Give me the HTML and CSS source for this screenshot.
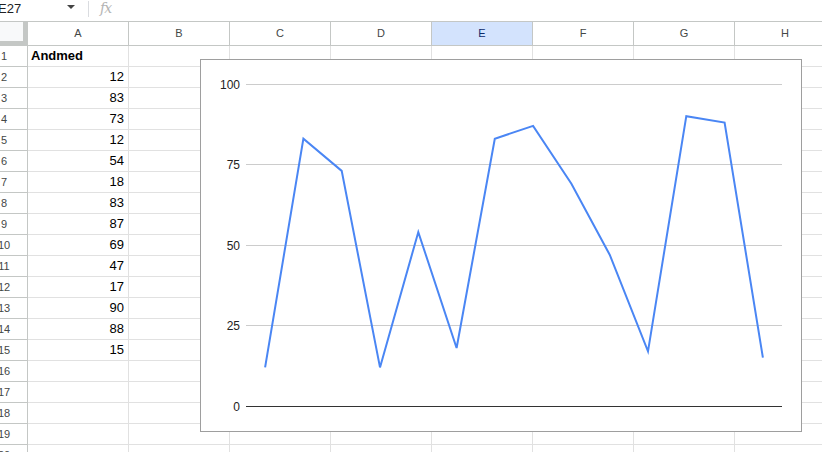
FILE: index.html
```html
<!DOCTYPE html>
<html>
<head>
<meta charset="utf-8">
<link rel="stylesheet" href="styles.css">
</head>
<body>
<div class="app">
  <div class="formula-bar">
    <div class="name-box">E27</div>
    <div class="name-caret"></div>
    <div class="fb-sep"></div>
    <div class="fx">fx</div>
  </div>
  <div class="sheet-wrap">
    <div class="sheet">
      <div class="corner"></div>
      <div class="ch">A</div><div class="ch">B</div><div class="ch">C</div><div class="ch">D</div>
      <div class="ch sel">E</div><div class="ch">F</div><div class="ch">G</div><div class="ch">H</div>

      <div class="rh">1</div><div class="c bold">Andmed</div><div class="c"></div><div class="c"></div><div class="c"></div><div class="c"></div><div class="c"></div><div class="c"></div><div class="c"></div>
      <div class="rh">2</div><div class="c num">12</div><div class="c"></div><div class="c"></div><div class="c"></div><div class="c"></div><div class="c"></div><div class="c"></div><div class="c"></div>
      <div class="rh">3</div><div class="c num">83</div><div class="c"></div><div class="c"></div><div class="c"></div><div class="c"></div><div class="c"></div><div class="c"></div><div class="c"></div>
      <div class="rh">4</div><div class="c num">73</div><div class="c"></div><div class="c"></div><div class="c"></div><div class="c"></div><div class="c"></div><div class="c"></div><div class="c"></div>
      <div class="rh">5</div><div class="c num">12</div><div class="c"></div><div class="c"></div><div class="c"></div><div class="c"></div><div class="c"></div><div class="c"></div><div class="c"></div>
      <div class="rh">6</div><div class="c num">54</div><div class="c"></div><div class="c"></div><div class="c"></div><div class="c"></div><div class="c"></div><div class="c"></div><div class="c"></div>
      <div class="rh">7</div><div class="c num">18</div><div class="c"></div><div class="c"></div><div class="c"></div><div class="c"></div><div class="c"></div><div class="c"></div><div class="c"></div>
      <div class="rh">8</div><div class="c num">83</div><div class="c"></div><div class="c"></div><div class="c"></div><div class="c"></div><div class="c"></div><div class="c"></div><div class="c"></div>
      <div class="rh">9</div><div class="c num">87</div><div class="c"></div><div class="c"></div><div class="c"></div><div class="c"></div><div class="c"></div><div class="c"></div><div class="c"></div>
      <div class="rh">10</div><div class="c num">69</div><div class="c"></div><div class="c"></div><div class="c"></div><div class="c"></div><div class="c"></div><div class="c"></div><div class="c"></div>
      <div class="rh">11</div><div class="c num">47</div><div class="c"></div><div class="c"></div><div class="c"></div><div class="c"></div><div class="c"></div><div class="c"></div><div class="c"></div>
      <div class="rh">12</div><div class="c num">17</div><div class="c"></div><div class="c"></div><div class="c"></div><div class="c"></div><div class="c"></div><div class="c"></div><div class="c"></div>
      <div class="rh">13</div><div class="c num">90</div><div class="c"></div><div class="c"></div><div class="c"></div><div class="c"></div><div class="c"></div><div class="c"></div><div class="c"></div>
      <div class="rh">14</div><div class="c num">88</div><div class="c"></div><div class="c"></div><div class="c"></div><div class="c"></div><div class="c"></div><div class="c"></div><div class="c"></div>
      <div class="rh">15</div><div class="c num">15</div><div class="c"></div><div class="c"></div><div class="c"></div><div class="c"></div><div class="c"></div><div class="c"></div><div class="c"></div>
      <div class="rh">16</div><div class="c"></div><div class="c"></div><div class="c"></div><div class="c"></div><div class="c"></div><div class="c"></div><div class="c"></div><div class="c"></div>
      <div class="rh">17</div><div class="c"></div><div class="c"></div><div class="c"></div><div class="c"></div><div class="c"></div><div class="c"></div><div class="c"></div><div class="c"></div>
      <div class="rh">18</div><div class="c"></div><div class="c"></div><div class="c"></div><div class="c"></div><div class="c"></div><div class="c"></div><div class="c"></div><div class="c"></div>
      <div class="rh">19</div><div class="c"></div><div class="c"></div><div class="c"></div><div class="c"></div><div class="c"></div><div class="c"></div><div class="c"></div><div class="c"></div>
      <div class="rh">20</div><div class="c"></div><div class="c"></div><div class="c"></div><div class="c"></div><div class="c"></div><div class="c"></div><div class="c"></div><div class="c"></div>
    </div>

    <div class="chart">
      <svg width="602" height="373" viewBox="0 0 602 373" xmlns="http://www.w3.org/2000/svg">
        <g stroke="#cccccc" stroke-width="1">
          <line x1="46" y1="25.5" x2="582" y2="25.5"/>
          <line x1="46" y1="105.5" x2="582" y2="105.5"/>
          <line x1="46" y1="186.5" x2="582" y2="186.5"/>
          <line x1="46" y1="266.5" x2="582" y2="266.5"/>
        </g>
        <line x1="46" y1="347.5" x2="582" y2="347.5" stroke="#333333" stroke-width="1"/>
        <g class="axis" text-anchor="end">
          <text x="40" y="30">100</text>
          <text x="40" y="110">75</text>
          <text x="40" y="191">50</text>
          <text x="40" y="271">25</text>
          <text x="40" y="352">0</text>
        </g>
        <polyline fill="none" stroke="#4a86f4" stroke-width="2" stroke-linejoin="miter"
          points="65.1,308.4 103.4,79.7 141.7,111.9 180.0,308.4 218.3,173.1 256.6,289.0 294.8,79.7 333.1,66.9 371.4,124.8 409.7,195.7 448.0,292.3 486.3,57.2 524.6,63.6 562.9,298.7"/>
      </svg>
    </div>
  </div>
</div>
</body>
</html>
```

FILE: styles.css
```css
html, body {
  margin: 0;
  padding: 0;
  background: #ffffff;
  overflow: hidden;
}
body {
  width: 822px;
  height: 452px;
  font-family: "Liberation Sans", Arial, sans-serif;
  color: #000;
}
.app {
  width: 822px;
  height: 452px;
  overflow: hidden;
}
.formula-bar {
  height: 21px;
  display: flex;
  align-items: center;
  box-sizing: border-box;
}
.name-box {
  margin-left: -2px;
  width: 66px;
  font-size: 13px;
  color: #202124;
  line-height: 21px;
  padding-bottom: 5px;
}
.name-caret {
  width: 0;
  height: 0;
  border-left: 4px solid transparent;
  border-right: 4px solid transparent;
  border-top: 4px solid #444;
  margin-left: 3px;
  margin-bottom: 8px;
}
.fb-sep {
  width: 1px;
  height: 16px;
  background: #dadce0;
  margin-left: 13px;
  margin-bottom: 4px;
}
.fx {
  margin-left: 11px;
  font-family: "DejaVu Serif", "Liberation Serif", serif;
  font-style: italic;
  font-size: 14px;
  color: #b4b4b4;
  letter-spacing: -1px;
  margin-bottom: 6px;
}
.sheet-wrap {
  position: relative;
}
.sheet {
  margin-left: -19px;
  display: grid;
  grid-template-columns: 47px repeat(8, 101px);
  grid-template-rows: 25px;
  grid-auto-rows: 21px;
}
.corner {
  box-sizing: border-box;
  background: #f8f9fa;
  border-top: 1px solid #c4c7c5;
  border-right: 5px solid #c4c7c5;
  border-bottom: 5px solid #c4c7c5;
}
.ch {
  box-sizing: border-box;
  border-top: 1px solid #c4c7c5;
  border-right: 1px solid #c4c7c5;
  border-bottom: 1px solid #c4c7c5;
  font-size: 11px;
  color: #444746;
  text-align: center;
  line-height: 23px;
}
.ch.sel {
  background: #d3e3fd;
  color: #0b2a6b;
}
.rh {
  box-sizing: border-box;
  border-right: 1px solid #c4c7c5;
  border-bottom: 1px solid #c4c7c5;
  font-size: 11px;
  color: #444746;
  text-align: center;
  line-height: 20px;
}
.c {
  box-sizing: border-box;
  border-right: 1px solid #e1e1e1;
  border-bottom: 1px solid #e1e1e1;
  font-size: 13px;
  line-height: 20px;
  padding: 0 3px;
  white-space: nowrap;
  overflow: hidden;
}
.c.num {
  text-align: right;
  padding-right: 4px;
}
.c.bold {
  font-weight: bold;
}
.chart {
  position: absolute;
  left: 200px;
  top: 38px;
  width: 602px;
  height: 373px;
  box-sizing: border-box;
  border: 1px solid #9e9e9e;
  background: #ffffff;
  overflow: hidden;
}
.chart svg {
  display: block;
  margin: -1px 0 0 -1px;
}
.axis text {
  font-family: "Liberation Sans", Arial, sans-serif;
  font-size: 12px;
  fill: #222222;
}
```
